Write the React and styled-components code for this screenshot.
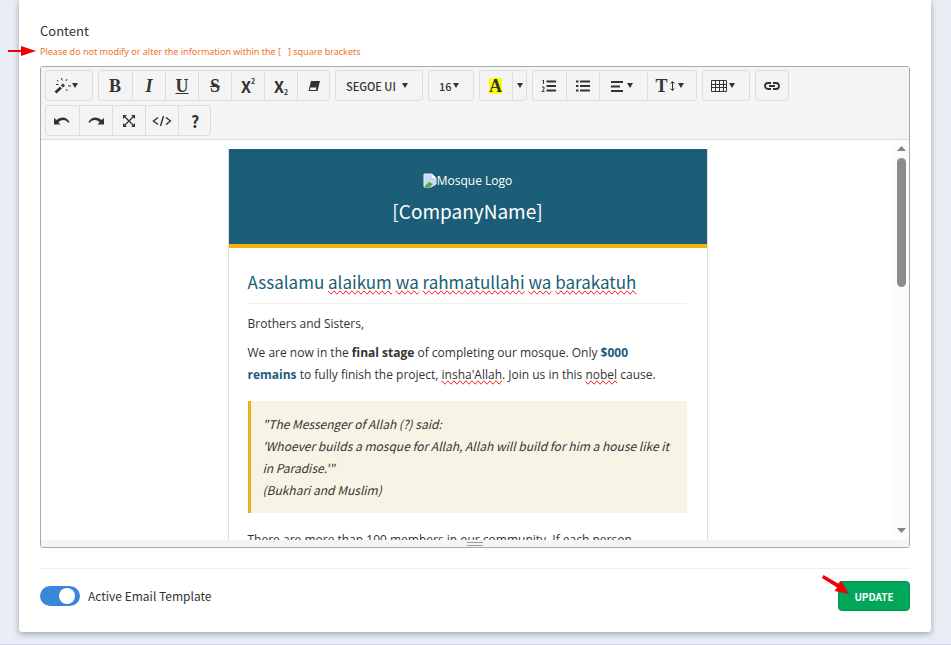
import React, { useState } from 'react';
import styled, { createGlobalStyle, css } from 'styled-components';

const uiFont = '"Noto Sans CJK SC", "Open Sans", sans-serif';
const mailFont = '"Open Sans", "Noto Sans", sans-serif';

const GlobalStyle = createGlobalStyle`
  * {
    box-sizing: border-box;
  }

  body {
    margin: 0;
    background: #eaeef4;
    color: #333;
    font-family: ${uiFont};
    font-size: 12px;
  }
`;

// Page
const Page = styled.div`
  overflow: hidden;
`;

const Card = styled.form`
  position: relative;
  margin: 0 20px 12px 19px;
  padding: 20px 21px 21px;
  background: #fff;
  border-radius: 0 0 3px 3px;
  box-shadow: 0 2px 6px rgba(40, 50, 70, 0.4);
`;

const PageFooter = styled.footer`
  height: 8px;
  border-top: 1px solid #cfd6e2;
`;

const Label = styled.div`
  font-size: 13px;
  line-height: 22px;
`;

const Note = styled.p`
  margin: 0;
  font-family: "Noto Sans", sans-serif;
  font-size: 9px;
  line-height: 20px;
  color: #ee7426;
  white-space: pre;
`;

// Editor
const Editor = styled.section`
  margin-top: 4px;
  border: 1px solid #a9a9a9;
  border-radius: 3px;
  overflow: hidden;
`;

const Toolbar = styled.div`
  display: flex;
  flex-wrap: wrap;
  gap: 4px 5px;
  padding: 3px 4px;
  background: #f4f4f4;
  border-bottom: 1px solid #ddd;
`;

const Group = styled.div`
  display: flex;
  height: 31px;
  border-radius: 4px;
  box-shadow: inset 0 0 0 1px #ddd;
`;

const ToolButton = styled.button`
  display: flex;
  align-items: center;
  justify-content: center;
  gap: ${({ $gap }) => $gap || 0}px;
  width: ${({ $width }) => $width || 33}px;
  padding: 0;
  border: 0;
  background: transparent;
  color: #333;
  cursor: pointer;

  & + & {
    border-left: 1px solid #ddd;
  }

  ${({ $menu }) => $menu && css`
    padding-right: 6px;
  `}
`;

const Glyph = styled.span`
  font-family: "Liberation Serif", serif;
  font-size: 18px;
  font-weight: bold;
  font-style: ${({ $italic }) => ($italic ? 'italic' : 'normal')};
  text-decoration: ${({ $line }) => $line || 'none'};
  line-height: 18px;
`;

const SansGlyph = styled(Glyph)`
  font-family: ${uiFont};
  font-size: 16px;
`;

const Small = styled.small`
  font: bold 7px/8px ${uiFont};
  align-self: ${({ $low }) => ($low ? 'flex-end' : 'flex-start')};
  margin: ${({ $low }) => ($low ? '0 0 5px' : '7px 0 0')};
`;

const Highlight = styled(Glyph)`
  background: #ff0;
  line-height: 16px;
`;

const SelectBox = styled.label`
  display: flex;
  align-items: center;
  width: ${({ $width }) => $width}px;
  padding-left: 11px;
`;

const Select = styled.select`
  appearance: none;
  padding: 0;
  border: 0;
  background: transparent;
  color: #333;
  font: 500 11px ${uiFont};
  width: ${({ $width }) => $width}px;
`;

const CaretSvg = styled.svg`
  flex: none;
  width: 6px;
  height: 5px;
`;

const Icon = styled.svg`
  flex: none;
  width: ${({ $size }) => $size || 16}px;
  height: ${({ $size }) => $size || 16}px;
  fill: none;
  stroke: #333;
  stroke-width: 2;
`;

const EditArea = styled.div`
  display: flex;
  height: 400px;
  background: #fff;
`;

const Editable = styled.div`
  flex: 1;
  min-width: 0;
  padding: 9px 10px 0;
  overflow: hidden;
  outline: none;
`;

const ScrollTrack = styled.div`
  display: flex;
  flex-direction: column;
  align-items: center;
  width: 15px;
  padding: 6px 0 7px;
  background: #fcfcfc;
`;

const ScrollThumb = styled.div`
  width: 9px;
  height: 129px;
  margin: 7px 0 auto;
  border-radius: 5px;
  background: #8b8b8b;
`;

const ScrollArrow = styled.svg`
  width: 9px;
  height: 5px;
  fill: #858585;
`;

const StatusBar = styled.div`
  display: flex;
  flex-direction: column;
  align-items: center;
  gap: 2px;
  height: 7px;
  padding-top: 2px;
  background: #f4f4f4;
`;

const Grip = styled.div`
  width: 16px;
  height: 1px;
  background: #999;
`;

// Mail preview
const Mail = styled.article`
  max-width: 480px;
  margin: 0 auto;
  border: 1px solid #ddd;
  border-top: 0;
  font-family: ${mailFont};
  font-size: 12px;
  line-height: 22px;
`;

const MailHeader = styled.header`
  display: flex;
  flex-direction: column;
  align-items: center;
  padding: 20px;
  border-bottom: 4px solid #efb30a;
  background: #1c5e78;
  color: #fff;
`;

const LogoAlt = styled.div`
  display: flex;
  align-items: center;
  height: 23px;
`;

const Company = styled.h1`
  margin: 5px 0 0;
  font: 400 19px/27px ${uiFont};
`;

const MailBody = styled.div`
  padding: 20px 20px 0 19px;
`;

const Greeting = styled.h2`
  margin: 0 0 9px;
  padding: 1px 0 8px;
  border-bottom: 1px solid #eee;
  color: #1c5e78;
  font: 400 17px/26px ${uiFont};
`;

const Paragraph = styled.p`
  margin: 0 0 7px;
  padding-right: 8px;
`;

const Amount = styled.strong`
  color: #1c5e78;
`;

const Misspelt = styled.span`
  text-decoration: spelling-error;
`;

const Quote = styled.blockquote`
  margin: 15px 0 16px;
  padding: 12px;
  border-left: 3px solid #e6b31e;
  background: #f8f4e5;
  font-family: ${uiFont};
  font-style: italic;
`;

// Bottom bar
const Actions = styled.div`
  display: flex;
  align-items: center;
  justify-content: space-between;
  margin-top: 20px;
  padding-top: 12px;
  border-top: 1px solid #eee;
`;

const SwitchLabel = styled.label`
  display: flex;
  align-items: center;
  gap: 8px;
  line-height: 20px;
`;

const Switch = styled.input`
  appearance: none;
  display: flex;
  align-items: center;
  justify-content: ${({ checked }) => (checked ? 'flex-end' : 'flex-start')};
  width: 40px;
  height: 20px;
  margin: 0;
  padding: 0 5px;
  border-radius: 10px;
  background: ${({ checked }) => (checked ? '#3a87d9' : '#bbb')};

  &::after {
    content: '';
    width: 16px;
    height: 16px;
    border-radius: 50%;
    background: #fff;
  }
`;

const UpdateButton = styled.button`
  position: relative;
  width: 72px;
  height: 30px;
  padding: 0;
  border: 1px solid #00944f;
  border-radius: 4px;
  background: #00a65a;
  color: #fff;
  font: bold 10px ${uiFont};
`;

const NoteArrow = styled.svg`
  position: absolute;
  left: -12px;
  top: 45px;
  width: 30px;
  height: 12px;
`;

const UpdateArrow = styled.svg`
  position: absolute;
  left: -18px;
  top: -8px;
  width: 30px;
  height: 24px;
`;

const Caret = () => (
  <CaretSvg viewBox="0 0 6 5" aria-hidden="true">
    <path d="M0 0h6L3 5z" fill="#333" />
  </CaretSvg>
);

const WandIcon = () => (
  <Icon $size={18} viewBox="0 0 18 18">
    <path d="M1.500 15.500L7 10.500" strokeWidth="3" />
    <path d="M8 9.500l2-2" strokeWidth="3" />
    <path d="M7.500 1l.7 2.500M3 3l1.500 1.500M13 2l-1 2M2 7.500h2.500M14 9h3M12 12l1.500 2" strokeWidth="1" />
  </Icon>
);

const EraserIcon = () => (
  <Icon viewBox="0 0 16 16">
    <path d="M5 3h9l-2.500 10h-9z" fill="#333" stroke="none" />
    <path d="M4.500 9.500h6l-.6 2.500H3.800z" fill="#f4f4f4" stroke="none" />
  </Icon>
);

const OrderedIcon = () => (
  <Icon viewBox="0 0 16 16">
    <path d="M5.500 3.500H15M5.500 8H15M5.500 12.500H15" />
    <path d="M1.500 3l1-1v4M1 9h2v2l-2 2.500h2.500" strokeWidth="1" />
  </Icon>
);

const BulletIcon = () => (
  <Icon viewBox="0 0 16 16">
    <path d="M5 3.500h10M5 8h10M5 12.500h10M1 3.500h2.500M1 8h2.500M1 12.500h2.500" />
  </Icon>
);

const AlignIcon = () => (
  <Icon viewBox="0 0 16 16">
    <path d="M2 4h12M2 8.500h9M2 13h12" />
  </Icon>
);

const HeightIcon = () => (
  <Icon $size={10} viewBox="0 0 10 10">
    <path d="M4.500 1v8M2.500 2.500l2-2 2 2M2.500 7.500l2 2 2-2" strokeWidth="1" />
  </Icon>
);

const TableIcon = () => (
  <Icon viewBox="0 0 16 16">
    <path d="M.5 2.500h15v11H.5zM.5 6.500h15M.5 9.500h15M4.500 2.500v11M8.500 2.500v11M12.500 2.500v11" strokeWidth="1" />
  </Icon>
);

const LinkIcon = () => (
  <Icon viewBox="0 0 16 16">
    <path d="M7 11H4a3 3 0 010-6h3M9 5h3a3 3 0 010 6H9M5 8h6" strokeWidth="1.800" />
  </Icon>
);

const UndoIcon = () => (
  <Icon viewBox="0 0 16 16">
    <path d="M0 5v6.500h6.500L4.500 9.500C7.500 6 12 6.500 14.500 10l1-1C12.500 3.500 6.500 3.500 2.500 7z" fill="#333" stroke="none" />
  </Icon>
);

const RedoIcon = () => (
  <Icon viewBox="0 0 16 16">
    <path d="M16 5v6.500H9.500l2-2C8.500 6 4 6.500 1.500 10l-1-1C3.500 3.500 9.500 3.500 13.500 7z" fill="#333" stroke="none" />
  </Icon>
);

const FullscreenIcon = () => (
  <Icon viewBox="0 0 16 16">
    <path d="M3 3l10 10M13 3L3 13" strokeWidth="1.300" />
    <path d="M2 2h4L2 6zM14 2v4l-4-4zM2 14v-4l4 4zM14 14h-4l4-4z" fill="#333" stroke="none" />
  </Icon>
);

const CodeIcon = () => (
  <Icon $size={20} viewBox="0 0 20 20">
    <path d="M6 6.500L1.500 10 6 13.500M14 6.500l4.500 3.500-4.500 3.500M11.500 5l-3 10" strokeWidth="1.400" />
  </Icon>
);

const BrokenImage = () => (
  <svg width="14" height="16" viewBox="0 0 14 16" aria-hidden="true">
    <path d="M1 1h8l4 4v6l-5 3H1z" fill="#c8d8f5" stroke="#eef2f8" />
    <path d="M1 14l5-5 4 2-3 3z" fill="#57a64a" />
    <path d="M9 1v4h4z" fill="#fff" />
  </svg>
);

const EditorToolbar = () => (
  <Toolbar role="toolbar" aria-label="Formatting">
    <Group>
      <ToolButton type="button" aria-label="Style" $width={48} $menu><WandIcon /><Caret /></ToolButton>
    </Group>
    <Group>
      <ToolButton type="button" aria-label="Bold" $width={34}><Glyph>B</Glyph></ToolButton>
      <ToolButton type="button" aria-label="Italic"><Glyph $italic>I</Glyph></ToolButton>
      <ToolButton type="button" aria-label="Underline"><Glyph $line="underline">U</Glyph></ToolButton>
      <ToolButton type="button" aria-label="Strikethrough"><Glyph $line="line-through">S</Glyph></ToolButton>
      <ToolButton type="button" aria-label="Superscript"><SansGlyph>X</SansGlyph><Small>2</Small></ToolButton>
      <ToolButton type="button" aria-label="Subscript"><SansGlyph>X</SansGlyph><Small $low>2</Small></ToolButton>
      <ToolButton type="button" aria-label="Remove formatting"><EraserIcon /></ToolButton>
    </Group>
    <Group>
      <SelectBox $width={88}>
        <Select aria-label="Font family" $width={56}><option>SEGOE UI</option></Select>
        <Caret />
      </SelectBox>
    </Group>
    <Group>
      <SelectBox $width={46}>
        <Select aria-label="Font size" $width={14}><option>16</option></Select>
        <Caret />
      </SelectBox>
    </Group>
    <Group>
      <ToolButton type="button" aria-label="Highlight"><Highlight>A</Highlight></ToolButton>
      <ToolButton type="button" aria-label="More colors" $width={15}><Caret /></ToolButton>
    </Group>
    <Group>
      <ToolButton type="button" aria-label="Ordered list" $width={34}><OrderedIcon /></ToolButton>
      <ToolButton type="button" aria-label="Unordered list"><BulletIcon /></ToolButton>
      <ToolButton type="button" aria-label="Paragraph" $width={48} $gap={2} $menu><AlignIcon /><Caret /></ToolButton>
      <ToolButton type="button" aria-label="Line height" $width={50} $menu><Glyph>T</Glyph><HeightIcon /><Caret /></ToolButton>
    </Group>
    <Group>
      <ToolButton type="button" aria-label="Table" $width={48} $gap={2} $menu><TableIcon /><Caret /></ToolButton>
    </Group>
    <Group>
      <ToolButton type="button" aria-label="Link" $width={34}><LinkIcon /></ToolButton>
    </Group>
    <Group>
      <ToolButton type="button" aria-label="Undo" $width={34}><UndoIcon /></ToolButton>
      <ToolButton type="button" aria-label="Redo"><RedoIcon /></ToolButton>
      <ToolButton type="button" aria-label="Full screen"><FullscreenIcon /></ToolButton>
      <ToolButton type="button" aria-label="Code view"><CodeIcon /></ToolButton>
      <ToolButton type="button" aria-label="Help"><SansGlyph>?</SansGlyph></ToolButton>
    </Group>
  </Toolbar>
);

const MailTemplate = () => (
  <Mail>
    <MailHeader>
      <LogoAlt><BrokenImage />Mosque Logo</LogoAlt>
      <Company>[CompanyName]</Company>
    </MailHeader>
    <MailBody>
      <Greeting>
        Assalamu <Misspelt>alaikum</Misspelt> <Misspelt>wa</Misspelt> <Misspelt>rahmatullahi</Misspelt>{' '}
        <Misspelt>wa</Misspelt> <Misspelt>barakatuh</Misspelt>
      </Greeting>
      <Paragraph>Brothers and Sisters,</Paragraph>
      <Paragraph>
        We are now in the <strong>final stage</strong> of completing our mosque. Only <Amount>$000 remains</Amount>{' '}
        to fully finish the project, <Misspelt>insha'Allah</Misspelt>. Join us in this <Misspelt>nobel</Misspelt> cause.
      </Paragraph>
      <Quote>
        "The Messenger of Allah (?) said:<br />
        'Whoever builds a mosque for Allah, Allah will build for him a house like it in Paradise.'"<br />
        (Bukhari and Muslim)
      </Quote>
      <Paragraph>There are more than 100 members in our community. If each person</Paragraph>
    </MailBody>
  </Mail>
);

const App = () => {
  const [active, setActive] = useState(true);

  return (
    <Page>
      <GlobalStyle />
      <Card onSubmit={(e) => e.preventDefault()}>
        <Label id="content-label">Content</Label>
        <Note>{'Please do not modify or alter the information within the [   ] square brackets'}</Note>
        <NoteArrow viewBox="0 0 30 12" aria-hidden="true">
          <path d="M1 5h13V1l15 5-15 5V7H1z" fill="#f00000" />
        </NoteArrow>
        <Editor>
          <EditorToolbar />
          <EditArea>
            <Editable
              role="textbox"
              aria-labelledby="content-label"
              contentEditable
              suppressContentEditableWarning
              spellCheck={false}
            >
              <MailTemplate />
            </Editable>
            <ScrollTrack>
              <ScrollArrow viewBox="0 0 9 5"><path d="M0 5L4.500 0 9 5z" /></ScrollArrow>
              <ScrollThumb />
              <ScrollArrow viewBox="0 0 9 5"><path d="M0 0h9L4.500 5z" /></ScrollArrow>
            </ScrollTrack>
          </EditArea>
          <StatusBar>
            <Grip />
            <Grip />
          </StatusBar>
        </Editor>
        <Actions>
          <SwitchLabel>
            <Switch type="checkbox" checked={active} onChange={(e) => setActive(e.target.checked)} />
            Active Email Template
          </SwitchLabel>
          <UpdateButton type="submit">
            UPDATE
            <UpdateArrow viewBox="0 0 30 24" aria-hidden="true">
              <path d="M2.500 1L18 10l2-3.500L28 20l-14.500-3 2.500-3.500L1 4z" fill="#f00000" />
            </UpdateArrow>
          </UpdateButton>
        </Actions>
      </Card>
      <PageFooter />
    </Page>
  );
};

export default App;
